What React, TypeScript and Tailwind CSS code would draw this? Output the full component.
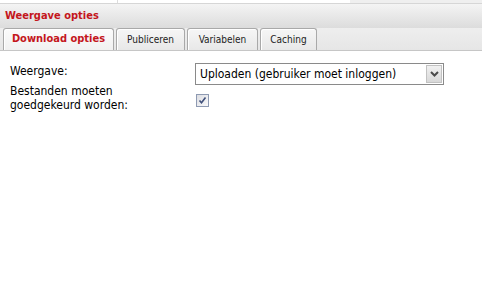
import React from "react";

const cond = { fontFamily: '"DejaVu Sans Condensed", "DejaVu Sans", Verdana, sans-serif', fontStretch: "condensed" as const };

function Tab({ label, active, w }: { label: string; active?: boolean; w: string }) {
  return (
    <div
      className={
        "flex h-[22px] items-center justify-center rounded-t-[3px] border border-b-0 border-[#a9a9a9] shadow-[inset_1px_1px_0_#ffffff] " +
        w +
        " " +
        (active
          ? "bg-gradient-to-b from-[#fbfbfb] to-[#f1f1f1] text-[11px] font-bold text-[#c4161c]"
          : "bg-gradient-to-b from-[#f6f6f6] to-[#e8e8e8] text-[10px] text-[#222222]")
      }
      style={cond}
    >
      {label}
    </div>
  );
}

export default function App() {
  return (
    <div className="relative h-[282px] w-[482px] overflow-hidden bg-white">
      {/* top strip */}
      <div className="flex h-[4px] border-b border-[#d6d6d6]">
        <div className="w-[118px] border-r border-[#dddddd] bg-white" />
        <div className="w-[232px] bg-white" />
        <div className="flex-1 bg-[#efefef]" />
      </div>
      {/* header */}
      <div
        className="flex h-[24px] items-center bg-gradient-to-b from-[#f4f4f4] to-[#dcdcdc] pl-[5px] text-[11px] font-bold text-[#c4161c]"
        style={cond}
      >
        Weergave opties
      </div>
      {/* tabs */}
      <div className="flex h-[23px] items-end gap-[2px] border-b border-[#c6c6c6] bg-gradient-to-b from-[#eeeeee] to-[#e6e6e6] pl-[3px]">
        <Tab label="Download opties" active w="w-[111px]" />
        <Tab label="Publiceren" w="w-[69px]" />
        <Tab label="Variabelen" w="w-[71px]" />
        <Tab label="Caching" w="w-[57px]" />
      </div>
      {/* content */}
      <div className="pt-[12px] text-[12px] leading-[14px] text-black" style={cond}>
        <div className="flex h-[21px] items-start">
          <div className="w-[195px] pl-[10px] pt-[1px]">Weergave:</div>
          <div className="relative flex h-[22px] w-[249px] items-center border border-[#8a8a8a] bg-white">
            <span className="flex-1 pl-[4px]">Uploaden (gebruiker moet inloggen)</span>
            <div className="mr-[1px] flex h-[18px] w-[16px] items-center justify-center border border-[#c2c2c2] bg-gradient-to-b from-[#f1f1f1] to-[#d8d8d8]">
              <svg width="9" height="6" viewBox="0 0 9 6">
                <path d="M1 1 L4.5 4.5 L8 1" fill="none" stroke="#4a4a4a" strokeWidth="2" />
              </svg>
            </div>
          </div>
        </div>
        <div className="flex items-start">
          <div className="w-[195px] pl-[10px]">
            Bestanden moeten
            <br />
            goedgekeurd worden:
          </div>
          <div className="ml-[1px] mt-[10px] flex h-[13px] w-[13px] items-center justify-center border border-[#8e9ab2] bg-gradient-to-br from-[#dcdde2] to-[#f9f9fb]">
            <svg width="9" height="9" viewBox="0 0 9 9">
              <path d="M1.5 4.5 L3.5 6.8 L7.5 1.5" fill="none" stroke="#3f4f7a" strokeWidth="1.6" />
            </svg>
          </div>
        </div>
      </div>
    </div>
  );
}
